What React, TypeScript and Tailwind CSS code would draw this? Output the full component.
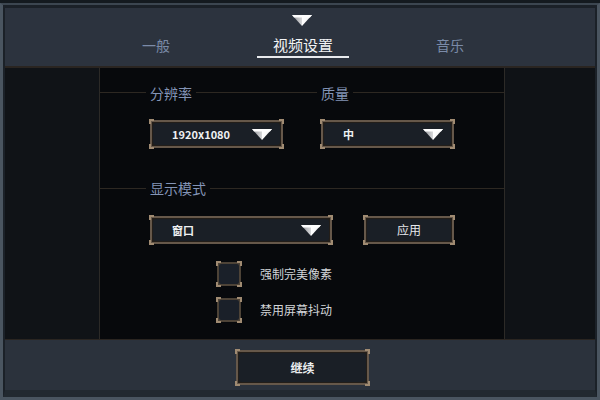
import React from "react";

const FONT = { fontFamily: '"Noto Sans CJK SC", "Noto Sans", sans-serif' };

function Corners() {
  return (
    <>
      <span className="absolute -left-px -top-px w-[5px] h-[5px] border-l-2 border-t-2 border-[#a08b72]" />
      <span className="absolute -right-px -top-px w-[5px] h-[5px] border-r-2 border-t-2 border-[#a08b72]" />
      <span className="absolute -left-px -bottom-px w-[5px] h-[5px] border-l-2 border-b-2 border-[#a08b72]" />
      <span className="absolute -right-px -bottom-px w-[5px] h-[5px] border-r-2 border-b-2 border-[#a08b72]" />
    </>
  );
}

function Frame({ className, children }: { className: string; children?: React.ReactNode }) {
  return (
    <div className={`relative bg-[#66584a] p-[2px] ${className}`}>
      <div className="h-full w-full bg-[#231e19] p-px">
        <div className="h-full w-full rounded-[3px] bg-[#1a1f26] flex items-center">{children}</div>
      </div>
      <Corners />
    </div>
  );
}

function Arrow({ w = 20, h = 11 }: { w?: number; h?: number }) {
  return (
    <svg width={w} height={h} viewBox="0 0 20 11">
      <defs>
        <linearGradient id="ag" x1="0" x2="1" y1="0" y2="0">
          <stop offset="0" stopColor="#8e8f93" />
          <stop offset="0.5" stopColor="#d8d9db" />
          <stop offset="0.5" stopColor="#ffffff" />
          <stop offset="1" stopColor="#f2f2f2" />
        </linearGradient>
      </defs>
      <polygon points="0,0 20,0 10,11" fill="url(#ag)" />
      <polygon points="0,0 20,0 18,2.5 2,2.5" fill="#ffffff" />
    </svg>
  );
}

function Dropdown({ w, label }: { w: string; label: string }) {
  return (
    <Frame className={`${w} h-[28px]`}>
      <span className="pl-[19px] text-[11px] font-bold text-[#eef0f2] flex-1">{label}</span>
      <span className="pr-[8px] flex items-center">
        <Arrow />
      </span>
    </Frame>
  );
}

function Checkbox({ label }: { label: string }) {
  return (
    <div className="flex items-center h-[24px]">
      <div className="relative w-[24px] h-[24px] bg-[#4d4337] p-[2px]">
        <div className="w-full h-full bg-[#1a2029] rounded-[2px]" />
        <Corners />
      </div>
      <span className="ml-[19px] text-[12px] text-[#d2d5d9]">{label}</span>
    </div>
  );
}

function SectionLabel({ children, className = "" }: { children: React.ReactNode; className?: string }) {
  return (
    <span className={`relative bg-[#07090c] px-[4px] text-[14px] leading-[14px] text-[#8394b6] ${className}`}>
      {children}
    </span>
  );
}

export default function App() {
  return (
    <div style={FONT} className="w-[600px] h-[400px] bg-[#20262e] overflow-hidden">
      <div className="w-full h-full border-t-[3px] border-[#141a1f] ">
        <div className="w-full h-full flex flex-col border-x-[3px] border-t-[2px] border-b-[3px] border-[#4a5560] border-t-[#3c4650]">
          <div className="flex-1 flex flex-col border-x-[2px] border-t-[3px] border-b-[7px] border-[#1b2128] border-b-[#222930]">
            {/* header */}
            <div className="relative h-[60px] bg-[#2c333e] border-b-2 border-[#2a2521] flex justify-center pl-[6px]">
              <div className="absolute left-[287px] top-[7px]">
                <Arrow w={20} h={11} />
              </div>
              <div className="w-[147px] flex justify-center pt-[27px]">
                <span className="text-[14px] leading-[20px] text-[#7b8ba8]">一般</span>
              </div>
              <div className="w-[147px] flex flex-col items-center pt-[27px]">
                <span className="text-[15px] leading-[20px] text-[#f2f3f5]">视频设置</span>
                <span className="mt-[1px] w-[92px] h-[2px] bg-[#e8eaed]" />
              </div>
              <div className="w-[147px] flex justify-center pt-[27px]">
                <span className="text-[14px] leading-[20px] text-[#7b8ba8]">音乐</span>
              </div>
            </div>
            {/* middle */}
            <div className="flex-1 flex">
              <div className="w-[95px] bg-[#101317] border-r border-[#2c2a27]" />
              <div className="w-[404px] bg-[#07090c] flex flex-col">
                {/* section 1 */}
                <div className="relative mt-[18px] h-[14px] flex items-center">
                  <div className="absolute inset-x-0 top-[6px] h-px bg-[#2d2822]" />
                  <SectionLabel className="ml-[46px]">分辨率</SectionLabel>
                  <SectionLabel className="ml-[121px]">质量</SectionLabel>
                </div>
                <div className="mt-[20px] flex pl-[50px] gap-[38px]">
                  <Dropdown w="w-[133px]" label="1920x1080" />
                  <Dropdown w="w-[133px]" label="中" />
                </div>
                {/* section 2 */}
                <div className="relative mt-[33px] h-[14px] flex items-center">
                  <div className="absolute inset-x-0 top-[7px] h-px bg-[#2d2822]" />
                  <SectionLabel className="ml-[46px]">显示模式</SectionLabel>
                </div>
                <div className="mt-[21px] flex pl-[50px] gap-[32px]">
                  <Dropdown w="w-[182px]" label="窗口" />
                  <Frame className="w-[90px] h-[28px]">
                    <span className="w-full text-center text-[12px] text-[#e6e8eb]">应用</span>
                  </Frame>
                </div>
                <div className="mt-[18px] flex flex-col gap-[12px] pl-[117px]">
                  <Checkbox label="强制完美像素" />
                  <Checkbox label="禁用屏幕抖动" />
                </div>
              </div>
              <div className="flex-1 bg-[#0f1216] border-l border-[#2c2a27]" />
            </div>
            {/* footer */}
            <div className="h-[51px] bg-[#2b323c] border-t border-[#2a2521] flex justify-center pl-[5px] pt-[10px]">
              <Frame className="w-[133px] h-[35px]">
                <span className="w-full text-center text-[12px] font-bold text-[#eceef0]">继续</span>
              </Frame>
            </div>
          </div>
        </div>
      </div>
    </div>
  );
}
